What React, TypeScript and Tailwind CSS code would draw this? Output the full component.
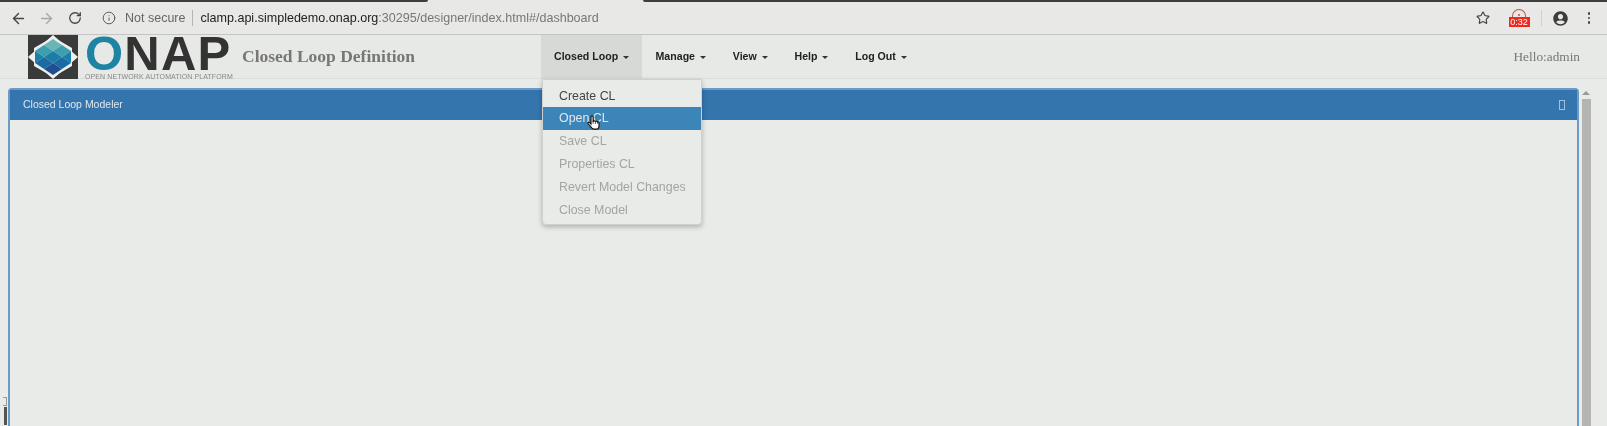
import { ArrowLeft, ArrowRight, RotateCw, Info, Star } from "lucide-react";
import { FaUserCircle } from "react-icons/fa";

const sans = "font-['Liberation_Sans',Arial,sans-serif]";

function Mark() {
  return (
    <svg viewBox="0 0 50 44" className="w-[50px] h-[44px] shrink-0">
      <rect width="50" height="44" fill="#3a3a3a" />
      <polygon points="25,0 50,22 25,44 0,22" fill="#eef0ee" />
      <polygon points="25,2 44,13 44,31 25,42 6,31 6,13" fill="#eef0ee" />
      <polygon points="25,4 34,10 25,16 16,10" fill="#6cb5b5" />
      <polygon points="16,10 25,16 16,22 7,16" fill="#3d9fae" />
      <polygon points="34,10 43,16 34,22 25,16" fill="#3d9fae" />
      <polygon points="25,16 34,22 25,28 16,22" fill="#1d7ca6" />
      <polygon points="7,16 16,22 7,28" fill="#1a80aa" />
      <polygon points="43,16 43,28 34,22" fill="#1a80aa" />
      <polygon points="16,22 25,28 16,34 7,28" fill="#1b6ba2" />
      <polygon points="34,22 43,28 34,34 25,28" fill="#1b6ba2" />
      <polygon points="25,28 34,34 25,40 16,34" fill="#1f4f8f" />
    </svg>
  );
}

function NavItem({ label, active }: { label: string; active?: boolean }) {
  return (
    <div className={`h-[44px] flex items-center pt-[1px] text-[10.6px] font-bold text-[#222] ${active ? "bg-[#d7d9d6] px-[13px]" : "px-[13.4px]"}`}>
      {label}
      <span className="ml-[5px] w-0 h-0 border-x-[3.5px] border-x-transparent border-t-[3.5px] border-t-[#333]" />
    </div>
  );
}

function MenuItem({ label, state }: { label: string; state?: "on" | "off" }) {
  const cls =
    state === "on"
      ? "bg-[#3c85b8] text-[#dfe8ee]"
      : state === "off"
        ? "text-[#a3a5a3]"
        : "text-[#444]";
  return <div className={`h-[22.8px] pl-[16px] flex items-center whitespace-nowrap ${cls}`}>{label}</div>;
}

export default function App() {
  return (
    <div className={`w-[1607px] h-[426px] overflow-hidden bg-[#e9ebe8] flex flex-col relative blur-[0.4px] ${sans}`}>
      {/* browser toolbar */}
      <div className="h-[35px] shrink-0 bg-[#e8e8e6] border-b border-[#c4c5c3] flex flex-col">
        <div className="h-[2px] flex">
          <div className="w-[428px] bg-[#3e3e3e] rounded-br-[2px]" />
          <div className="w-[215px]" />
          <div className="flex-1 bg-[#3e3e3e] rounded-bl-[2px]" />
        </div>
        <div className="flex-1 flex items-center pl-[10px] pr-[17px] text-[#5f6368]">
          <ArrowLeft size={17} strokeWidth={2} className="text-[#444]" />
          <ArrowRight size={17} strokeWidth={2} className="ml-[11px] text-[#a8a9a8]" />
          <RotateCw size={14} strokeWidth={2.2} className="ml-[13px] text-[#444]" />
          <Info size={14} strokeWidth={1.6} className="ml-[20px] text-[#555]" />
          <span className="ml-[9px] text-[12.5px] text-[#666]">Not secure</span>
          <span className="ml-[7px] w-px h-[16px] bg-[#b5b6b4]" />
          <span className="ml-[7px] text-[12.55px] text-[#222]">
            clamp.api.simpledemo.onap.org<span className="text-[#777]">:30295/designer/index.html#/dashboard</span>
          </span>
          <Star size={14} strokeWidth={2} className="ml-auto text-[#444]" />
          <div className="ml-[19px] w-[21px] flex flex-col items-center">
            <div className="w-[14px] h-[8px] border border-b-0 border-[#b9584f] rounded-t-full flex items-end justify-center">
              <span className="w-[2px] h-[2px] rounded-full bg-[#b9584f] mb-[1px]" />
            </div>
            <div className="h-[10px] w-[21px] bg-[#ee2a1e] text-white text-[9px] leading-[10px] text-center">0:32</div>
          </div>
          <span className="ml-[11px] w-px h-[16px] bg-[#cfd0ce]" />
          <FaUserCircle size={15} className="ml-[11px] text-[#3c3c3c]" />
          <div className="ml-[20px] flex flex-col gap-[2px]">
            <span className="w-[2.5px] h-[2.5px] rounded-full bg-[#444]" />
            <span className="w-[2.5px] h-[2.5px] rounded-full bg-[#444]" />
            <span className="w-[2.5px] h-[2.5px] rounded-full bg-[#444]" />
          </div>
        </div>
      </div>

      {/* app navbar */}
      <div className="h-[44px] shrink-0 flex items-center border-b border-[#dcdedb] bg-[#e7e9e6] relative">
        <div className="ml-[28px] w-[513px] flex items-center">
          <Mark />
          <div className="ml-[7px] w-[150px] h-[44px] flex flex-col">
            <div className="h-[37px] text-[49px] leading-[37px] tracking-[1.2px] font-bold text-[#333] whitespace-nowrap">
              <span className="text-[#1f83a4]">O</span>NAP
            </div>
            <div className="mt-[1px] text-[7px] leading-[8px] tracking-[0.1px] text-[#888] whitespace-nowrap">OPEN NETWORK AUTOMATION PLATFORM</div>
          </div>
          <div className="font-['Liberation_Serif',serif] font-bold text-[17.5px] text-[#777] whitespace-nowrap ml-[7px]">Closed Loop Definition</div>
        </div>
        <NavItem label="Closed Loop" active />
        <NavItem label="Manage" />
        <NavItem label="View" />
        <NavItem label="Help" />
        <NavItem label="Log Out" />
        <div className="ml-auto mr-[27px] font-['Liberation_Serif',serif] text-[13.3px] text-[#777]">Hello:admin</div>
      </div>

      {/* content */}
      <div className="flex-1 min-h-0 flex pl-[8px] pt-[9px] relative">
        <div className="w-[1571px] h-[400px] shrink-0 border-2 border-[#6d9bc8] border-b-0 rounded-t-[4px] bg-[#e9ebe8]">
          <div className="h-[30px] bg-[#3575ad] flex items-center justify-between pl-[13px] pr-[12px] text-[#dfe7ee] text-[10.5px]">
            <span>Closed Loop Modeler</span>
            <span className="w-[6px] h-[10px] border border-[#9ec3e0]" />
          </div>
        </div>
        <div className="ml-[2px] w-[10px] flex flex-col items-center">
          <span className="mt-[3px] w-0 h-0 border-x-[4px] border-x-transparent border-b-[4px] border-b-[#999]" />
          <div className="mt-[4px] w-[9px] flex-1 bg-[#b4b5b3]" />
        </div>

        {/* dropdown */}
        <div className="absolute left-[542px] top-0 w-[160px] h-[146px] py-[4.5px] bg-[#e9ebe8] border border-[#cfd1ce] rounded-b-[4px] shadow-[0_2px_5px_rgba(0,0,0,0.25)] text-[12.4px]">
          <MenuItem label="Create CL" />
          <MenuItem label="Open CL" state="on" />
          <MenuItem label="Save CL" state="off" />
          <MenuItem label="Properties CL" state="off" />
          <MenuItem label="Revert Model Changes" state="off" />
          <MenuItem label="Close Model" state="off" />
        </div>
        {/* pointer */}
        <svg viewBox="0 0 24 24" className="absolute left-[586px] top-[35px] w-[15px] h-[17px]">
          <path d="M8 3a1.7 1.7 0 0 1 3.4 0v7l1-.2a1.6 1.6 0 0 1 2.6.3l1-.1a1.6 1.6 0 0 1 2.3.7c1.4-.2 2.5.6 2.5 2V17c0 3-2 5.5-5 5.5h-3c-2.500 0-3.500-1-5-3.500L3.500 14c-1-1.500.8-3 2.300-1.700L8 14.500z" fill="#fff" stroke="#111" strokeWidth="1.8" />
          <path d="M11.400 10v4M15 10.200V14M18.300 10.800V14" stroke="#111" strokeWidth="1.2" />
        </svg>

        {/* left edge artefacts */}
        <div className="absolute left-[3px] top-[318px] w-[4px] h-[9px] border border-l-0 border-[#9a9a9a]" />
        <div className="absolute left-[4px] top-[328px] w-[3px] h-[18px] bg-[#555]" />
      </div>
    </div>
  );
}
